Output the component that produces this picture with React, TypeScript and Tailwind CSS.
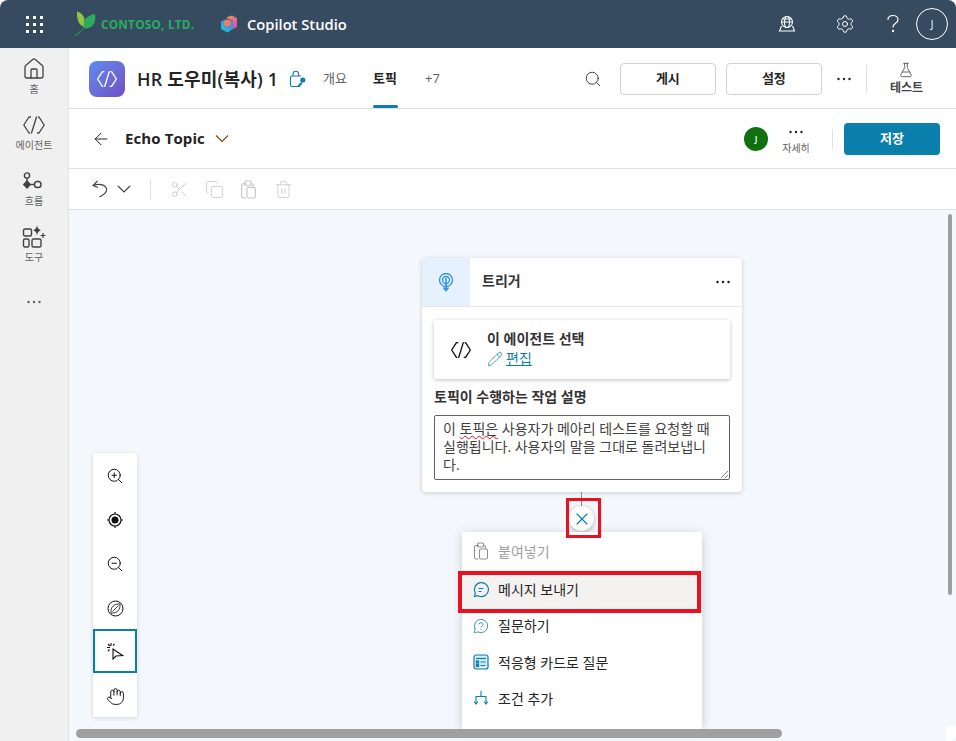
import React from "react";
import { Search, Settings, ArrowLeft, ChevronDown, Scissors, Copy, Trash2, ZoomIn, ZoomOut, Hand, X, Pencil, MessageCircleQuestion, FlaskConical, Home } from "lucide-react";

const Agent = ({ s = 24, c = "currentColor", w = 1.5 }: { s?: number; c?: string; w?: number }) => (
  <svg width={s} height={s} viewBox="0 0 24 24" fill="none" stroke={c} strokeWidth={w} strokeLinejoin="round" strokeLinecap="round">
    <path d="M8.500 4H7L1.800 12 7 20h.5" />
    <path d="M15.500 20H17l5.200-8L17 4h-.5" />
    <path d="M14.500 4 9.500 20" />
  </svg>
);

const Dots = ({ c = "#242424" }: { c?: string }) => (
  <svg width="16" height="4" viewBox="0 0 16 4" fill={c}>
    <circle cx="2.500" cy="2" r="1.200" /><circle cx="8" cy="2" r="1.200" /><circle cx="13.500" cy="2" r="1.200" />
  </svg>
);

const PasteIcon = ({ s = 18, c = "#c4c4c4" }: { s?: number; c?: string }) => (
  <svg width={s} height={s} viewBox="0 0 18 18" fill="none" stroke={c} strokeWidth="1.050">
    <path d="M7 3.500H4A1.500 1.500 0 0 0 2.500 5v10.500A1.500 1.500 0 0 0 4 17h2.500" />
    <path d="M11 3.500h1A1.500 1.500 0 0 1 13.500 5v1.500" />
    <rect x="5.500" y="1" width="6" height="4" rx="1" />
    <rect x="7.500" y="7" width="8" height="10" rx="1.500" />
  </svg>
);

const NavItem = ({ icon, label }: { icon: React.ReactNode; label: string }) => (
  <div className="flex flex-col items-center h-[56px]">
    <div className="h-[26px] flex items-center justify-center">{icon}</div>
    <div className="text-[10px] leading-[14px] text-[#616161]">{label}</div>
  </div>
);

const FlowIcon = () => (
  <svg width="24" height="26" viewBox="0 -4 24 26" fill="none" stroke="#424242" strokeWidth="1.400">
    <circle cx="5" cy="3.500" r="2.600" /><path d="M5 6v6" />
    <path d="M5 9 8.200 12.500 5 16 1.800 12.500Z" fill="#424242" />
    <path d="M8 12.500h4" /><rect x="12.500" y="9.500" width="6.500" height="6" rx="2.800" />
  </svg>
);
const ToolsIcon = () => (
  <svg width="24" height="26" viewBox="0 0 24 26" fill="none" stroke="#424242" strokeWidth="1.400">
    <rect x="1.500" y="5" width="8" height="7" rx="1.500" /><rect x="1.500" y="15" width="5.500" height="8" rx="1.500" /><rect x="10" y="15" width="9" height="8" rx="1.500" />
    <path d="M15 1c.4 3.200 1.500 4.400 4 5.200-2.500.8-3.600 2-4 5.200-.4-3.200-1.500-4.400-4-5.200 2.500-.8 3.600-2 4-5.200Z" fill="#424242" stroke="none" />
    <path d="M21 9v5M18.500 11.500h5" strokeWidth="1.200" />
  </svg>
);

const Leaf = () => (
  <svg width="22" height="26" viewBox="0 0 22 26" className="shrink-0">
    <path d="M9 16C4 14 1.500 9 2 .5c3.500 1 6.500 3.500 7.500 7Z" fill="#8dc63f" />
    <path d="M9 17C7 10 12 4 20 3c1.500 8-2 14-9 14.500Z" fill="#2eaa5e" />
    <path d="M0 24.500C5 21.500 10 17 15 8" stroke="#2eaa5e" strokeWidth="1" fill="none" />
  </svg>
);

const CopilotLogo = () => (
  <svg width="18" height="18" viewBox="0 0 18 18" className="shrink-0">
    <defs>
      <linearGradient id="cpa" x1="0" y1="0" x2="1" y2="1"><stop offset="0" stopColor="#f0a040" /><stop offset="1" stopColor="#e040c0" /></linearGradient>
      <linearGradient id="cpb" x1="0" y1="1" x2="1" y2="0"><stop offset="0" stopColor="#28c8c8" /><stop offset="1" stopColor="#3a7cf0" /></linearGradient>
    </defs>
    <path d="M6 2.500 12 .5l5 2.500v9l-4 2V6Z" fill="url(#cpa)" />
    <path d="M1 6.500 6.500 4 13 6v8l-5.500 3.500L1 14Z" fill="url(#cpb)" />
    <path d="M4 6 8 4.500l3 1.500v4l-4 2-3-2Z" fill="#f27a5e" />
  </svg>
);

const CanvasTool = ({ children, active }: { children: React.ReactNode; active?: boolean }) => (
  <div className={active ? "h-[44px] flex items-center justify-center border-2 border-[#0a7fab]" : "h-[44px] pt-[2px] flex items-center justify-center"}>{children}</div>
);

const Row = ({ icon, label, disabled, active, h }: { icon: React.ReactNode; label: string; disabled?: boolean; active?: boolean; h: string }) => (
  <div className={(active ? "bg-[#f3f2f0] " : "") + h + " flex items-center pl-[10px] gap-[8px] text-[14px] " + (disabled ? "text-[#9e9e9e]" : "text-[#242424]")}>
    <span className="w-[18px] flex justify-center">{icon}</span>
    <span>{label}</span>
  </div>
);

export default function App() {
  return (
    <div className="relative w-[956px] h-[741px] overflow-hidden bg-white flex flex-col text-[#242424]" style={{ fontFamily: '"Open Sans","Noto Sans CJK KR",sans-serif' }}>
      {/* Top bar */}
      <header className="h-[48px] shrink-0 bg-[#364b60] rounded-t-[8px] flex items-center text-white">
        <div className="w-[68px] flex justify-center">
          <div className="grid grid-cols-3 gap-[4px]">
            {Array.from({ length: 9 }).map((_, i) => <span key={i} className="w-[3px] h-[3px] bg-white" />)}
          </div>
        </div>
        <div className="ml-[7px] flex items-center gap-[4px] w-[126px]">
          <Leaf />
          <span className="text-[13px] font-bold tracking-[0.3px] text-[#27ae60] leading-none scale-x-[0.9] origin-left whitespace-nowrap">CONTOSO, LTD.</span>
        </div>
        <div className="ml-[19px] flex items-center gap-[9px]">
          <CopilotLogo />
          <span className="text-[15px] font-semibold leading-none scale-x-[0.98] origin-left">Copilot Studio</span>
        </div>
        <div className="ml-auto flex items-center">
          <svg width="18" height="18" viewBox="0 0 18 18" fill="none" stroke="white" strokeWidth="1.100" className="mr-[39px]">
            <circle cx="9" cy="7" r="5.500" /><ellipse cx="9" cy="7" rx="2.500" ry="5.500" /><path d="M3.500 7h11M4.500 4h9" />
            <path d="M3.500 11 1.500 16h15l-2-5" />
          </svg>
          <Settings size={20} strokeWidth={1.200} className="mr-[31px]" />
          <HelpCircleBare />
          <div className="ml-[16px] mr-[8px] w-[32px] h-[32px] rounded-full border border-white flex items-center justify-center text-[10px]">J</div>
        </div>
      </header>

      <div className="flex flex-1 min-h-0">
        {/* Left rail */}
        <nav className="w-[69px] shrink-0 bg-[#f0f0f0] border-r border-[#e3e3e3] flex flex-col items-center pt-[8px]">
          <NavItem icon={<Home size={24} strokeWidth={1.300} color="#424242" />} label="홈" />
          <NavItem icon={<Agent s={24} c="#424242" w={1.300} />} label="에이전트" />
          <NavItem icon={<FlowIcon />} label="흐름" />
          <NavItem icon={<ToolsIcon />} label="도구" />
          <div className="mt-[20px]"><Dots c="#616161" /></div>
        </nav>

        <main className="flex-1 min-w-0 flex flex-col">
          {/* Agent header */}
          <div className="h-[61px] shrink-0 border-b border-[#e0e0e0] flex items-center pl-[20px] pt-[2px]">
            <div className="w-[36px] h-[36px] rounded-[8px] bg-gradient-to-br from-[#5b8def] to-[#6f4fc4] flex items-center justify-center">
              <Agent s={22} c="white" w={1.500} />
            </div>
            <span className="ml-[12px] w-[142px] text-[18px] font-semibold whitespace-nowrap tracking-[0.2px]">HR 도우미(복사) 1</span>
            <svg width="18" height="18" viewBox="0 0 18 18" fill="none" stroke="#0a7fab" strokeWidth="1.100" className="ml-[10px]">
              <path d="M9 16.500H3A1.500 1.500 0 0 1 1.500 15V7.500A1.500 1.500 0 0 1 3 6h9" />
              <path d="M4 6V4a2.800 2.800 0 0 1 5.600 0v2" />
              <circle cx="13.800" cy="10" r="2.600" fill="#0a7fab" stroke="none" />
              <path d="M12.500 11.500 8.800 15.500v1.500h2l.5-1.500 1-.5.8-1.500" fill="#0a7fab" stroke="none" />
            </svg>
            <div className="ml-[8px] flex items-center h-full text-[13px]">
              <span className="text-[#616161] w-[50px] ml-[8px]">개요</span>
              <div className="relative h-full flex items-center w-[52px]">
                <span className="font-bold">토픽</span>
                <span className="absolute bottom-0 left-0 w-[25px] h-[3px] rounded-[2px] bg-[#0a7fab]" />
              </div>
              <span className="text-[#616161]">+7</span>
            </div>
            <Search size={18} strokeWidth={1.300} color="#424242" className="ml-[144px]" />
            <button className="ml-[18px] w-[96px] h-[32px] rounded-[4px] border border-[#d1d1d1] text-[13px] font-bold">게시</button>
            <button className="ml-[10px] w-[96px] h-[32px] rounded-[4px] border border-[#d1d1d1] text-[13px] font-bold">설정</button>
            <div className="ml-[14px]"><Dots /></div>
            <div className="ml-[14px] w-px h-[28px] bg-[#e0e0e0]" />
            <div className="ml-[23px] flex flex-col items-center -mt-[1px]">
              <FlaskConical size={16} strokeWidth={1.200} color="#424242" />
              <span className="text-[12px] font-semibold text-[#424242] mt-[2px] leading-[16px]">테스트</span>
            </div>
          </div>

          {/* Topic header */}
          <div className="h-[60px] shrink-0 border-b border-[#e0e0e0] flex items-center pl-[22px] pr-[16px]">
            <ArrowLeft size={20} strokeWidth={1.200} color="#242424" />
            <span className="ml-[14px] text-[15px] font-bold tracking-[0.1px]">Echo Topic</span>
            <svg width="16" height="9" viewBox="0 0 16 9" fill="none" stroke="#8a3a00" strokeWidth="1.100" className="ml-[9px]"><path d="M2 1.500 8 7.500l6-6" /></svg>
            <div className="ml-auto w-[24px] h-[24px] rounded-full bg-[#0e700e] text-white text-[9px] font-semibold flex items-center justify-center">J</div>
            <div className="ml-[9px] w-[38px] flex flex-col items-center">
              <div className="h-[18px] flex items-center"><Dots /></div>
              <span className="text-[10px] leading-[14px] text-[#616161]">자세히</span>
            </div>
            <div className="ml-[17px] w-px h-[20px] bg-[#e0e0e0]" />
            <button className="ml-[11px] w-[96px] h-[32px] rounded-[4px] bg-[#0a7fab] text-white text-[13px] font-bold">저장</button>
          </div>

          {/* Toolbar */}
          <div className="h-[41px] shrink-0 border-b border-[#e0e0e0] flex items-center pl-[23px] text-[#c4c4c4]">
            <svg width="16" height="18" viewBox="0 0 16 18" fill="none" stroke="#424242" strokeWidth="1.150">
              <path d="M5.500 1 1 5.500l5 2" />
              <path d="M1.200 5.500C6 3.500 13 4 14.500 8.500c.8 3-2 6-7 8.500" />
            </svg>
            <svg width="14" height="8" viewBox="0 0 14 8" fill="none" stroke="#424242" strokeWidth="1.150" className="ml-[9px]"><path d="M1 1l6 6 6-6" /></svg>
            <div className="ml-[19px] w-px h-[20px] bg-[#e0e0e0]" />
            <Scissors size={19} strokeWidth={1.000} className="ml-[19px]" />
            <Copy size={19} strokeWidth={1.000} className="ml-[16px]" />
            <span className="ml-[15px]"><PasteIcon s={19} /></span>
            <Trash2 size={19} strokeWidth={1.000} className="ml-[16px]" />
          </div>

          {/* Canvas */}
          <div className="relative flex-1 min-h-0 overflow-hidden bg-[#f4f8fc]">
            {/* Trigger node */}
            <div className="absolute left-[353px] top-[48px] w-[320px] h-[234px] bg-white rounded-[4px] shadow-[0_1px_4px_rgba(0,0,0,0.18)]">
              <div className="h-[49px] border-b border-[#e6e6e6] flex items-center">
                <div className="w-[48px] h-full bg-[#e5f2fd] rounded-tl-[4px] flex items-center justify-center">
                  <svg width="16" height="19" viewBox="0 0 16 19" fill="none" stroke="#2b8fe8" strokeWidth="1.300">
                    <circle cx="8" cy="7" r="6.500" /><circle cx="8" cy="7" r="3.500" />
                    <path d="M8 5v12M5.500 14.500 8 17.500l2.500-3" strokeWidth="1.500" />
                  </svg>
                </div>
                <span className="ml-[12px] text-[14px] font-bold text-[#333] -mt-[4px]">트리거</span>
                <div className="ml-auto mr-[11px]"><Dots c="#111" /></div>
              </div>
              <div className="mx-[12px] mt-[13px] h-[59px] bg-white rounded-[2px] shadow-[0_1px_4px_rgba(0,0,0,0.25)] flex items-center pl-[16px]">
                <Agent s={22} c="#111" w={1.500} />
                <div className="ml-[15px] flex flex-col -mt-[2px]">
                  <span className="text-[14px] font-bold leading-[20px] text-[#333]">이 에이전트 선택</span>
                  <span className="flex items-center gap-[3px] text-[14px] leading-[20px] text-[#0a7fab]">
                    <Pencil size={16} strokeWidth={1.100} /><span className="underline">편집</span>
                  </span>
                </div>
              </div>
              <div className="mx-[12px] mt-[8px] text-[14px] font-bold leading-[20px] text-[#333]">토픽이 수행하는 작업 설명</div>
              <div className="relative mx-[12px] mt-[8px] h-[65px] border border-[#616161] rounded-[2px] pl-[8px] pr-[8px] pt-[4px] text-[14px] leading-[18px] text-[#424242] [word-break:break-all]">
                <p className="m-0">이 <span className="underline decoration-wavy decoration-[#e81123] decoration-1">토픽은</span> 사용자가 메아리 테스트를 요청할 때 실행됩니다. 사용자의 말을 그대로 돌려보냅니다.</p>
                <svg width="9" height="9" viewBox="0 0 9 9" className="absolute right-0 bottom-0" stroke="#666" strokeWidth="0.800"><path d="M1 8 8 1M5 8l3-3" /></svg>
              </div>
            </div>

            {/* Connector and close */}
            <div className="absolute left-[512px] top-[282px] w-px h-[17px] bg-[#8a8a8a]" />
            <div className="absolute left-[500px] top-[296px] w-[25px] h-[25px] rounded-full bg-white shadow-[0_1px_4px_rgba(0,0,0,0.3)] flex items-center justify-center">
              <X size={20} strokeWidth={1.400} color="#0a7fab" />
            </div>

            {/* Add menu */}
            <div className="absolute left-[393px] top-[322px] w-[240px] h-[197px] overflow-hidden bg-white shadow-[0_2px_10px_rgba(0,0,0,0.18)]">
              <Row h="h-[38px]" disabled label="붙여넣기" icon={<PasteIcon s={18} c="#8f8f8f" />} />
              <Row h="h-[39px]" active label="메시지 보내기" icon={
                <svg width="18" height="18" viewBox="0 0 18 18" fill="none" stroke="#0a7fab" strokeWidth="1.200"><path d="M2.500 15.500 3.300 12A7 7 0 1 1 6 14.700Z" /><path d="M6.500 7.500h5M6.500 10.500h3" /></svg>
              } />
              <Row h="h-[33px]" label="질문하기" icon={<MessageCircleQuestion size={16} strokeWidth={1.200} color="#0a7fab" />} />
              <Row h="h-[40px]" label="적응형 카드로 질문" icon={
                <svg width="16" height="16" viewBox="0 0 16 16" fill="#d6eaf3" stroke="#0a7fab" strokeWidth="1.200"><rect x="1" y="1" width="14" height="14" rx="2" /><path d="M3 4.500h10" /><rect x="3.500" y="7" width="2" height="2" /><rect x="3.500" y="10.500" width="2" height="2" /><path d="M7.500 8h5M7.500 11.500h5" /></svg>
              } />
              <Row h="h-[32px]" label="조건 추가" icon={
                <svg width="16" height="16" viewBox="0 0 16 16" fill="none" stroke="#0a7fab" strokeWidth="1.100"><path d="M8 1v5M3 14V6.500h10V14" /><path d="M1 11.500 3 14l2-2.500M11 11.500l2 2.500 2-2.500" /></svg>
              } />
            </div>

            {/* Highlights */}
            <div className="absolute left-[497px] top-[288px] w-[35px] h-[40px] border-[3px] border-[#e81123]" />
            <div className="absolute left-[389px] top-[361px] w-[243px] h-[42px] border-[4px] border-[#e81123]" />

            {/* Canvas tools */}
            <div className="absolute left-[24px] top-[243px] w-[44px] bg-white shadow-[0_1px_4px_rgba(0,0,0,0.15)] flex flex-col">
              <CanvasTool><ZoomIn size={18} strokeWidth={1.300} color="#111" /></CanvasTool>
              <CanvasTool>
                <svg width="18" height="18" viewBox="0 0 18 18" fill="none" stroke="#111" strokeWidth="1.200"><circle cx="9" cy="9" r="6" /><circle cx="9" cy="9" r="3.500" fill="#111" stroke="none" /><path d="M9 1v2M9 15v2M1 9h2M15 9h2" /></svg>
              </CanvasTool>
              <CanvasTool><ZoomOut size={18} strokeWidth={1.300} color="#111" /></CanvasTool>
              <CanvasTool>
                <svg width="17" height="17" viewBox="0 0 17 17" fill="none" stroke="#111" strokeWidth="1"><circle cx="8.500" cy="8.500" r="7.500" /><path d="M4 13C3.500 7 7 3.500 13 4c.5 6-3 9.500-9 9ZM5.500 11.500l6-6" strokeWidth="0.800" /></svg>
              </CanvasTool>
              <CanvasTool active>
                <svg width="18" height="18" viewBox="0 0 18 18" fill="none" stroke="#111" strokeWidth="1.100"><path d="M7 7v10l3-3 6.500-.5Z" /><path d="M5 1v3M1 5.500h3M2 2l2 2M8.500 2 7 3.500M2 9l1.500-1.500" /></svg>
              </CanvasTool>
              <CanvasTool><Hand size={19} strokeWidth={1.200} color="#111" /></CanvasTool>
            </div>

            {/* Scrollbars */}
            <div className="absolute right-[4px] top-[4px] bottom-[146px] w-[4px] rounded-full bg-[#9e9e9e]" />
            <div className="absolute left-[7px] bottom-[3px] w-[706px] h-[9px] rounded-full bg-[#a0a0a0]" />
            <div className="absolute right-0 bottom-0 w-[10px] h-[15px] bg-white rounded-br-[8px]" />
          </div>
        </main>
      </div>
    </div>
  );
}

function HelpCircleBare() {
  return (
    <svg width="14" height="20" viewBox="0 0 14 20" fill="none" stroke="white" strokeWidth="1.200" strokeLinecap="round">
      <path d="M2 5.500C2 3 4.200 1.500 7 1.500s5 1.800 5 4.200c0 3.500-5 3.500-5 7.300" />
      <circle cx="7" cy="17" r="0.600" fill="white" />
    </svg>
  );
}
